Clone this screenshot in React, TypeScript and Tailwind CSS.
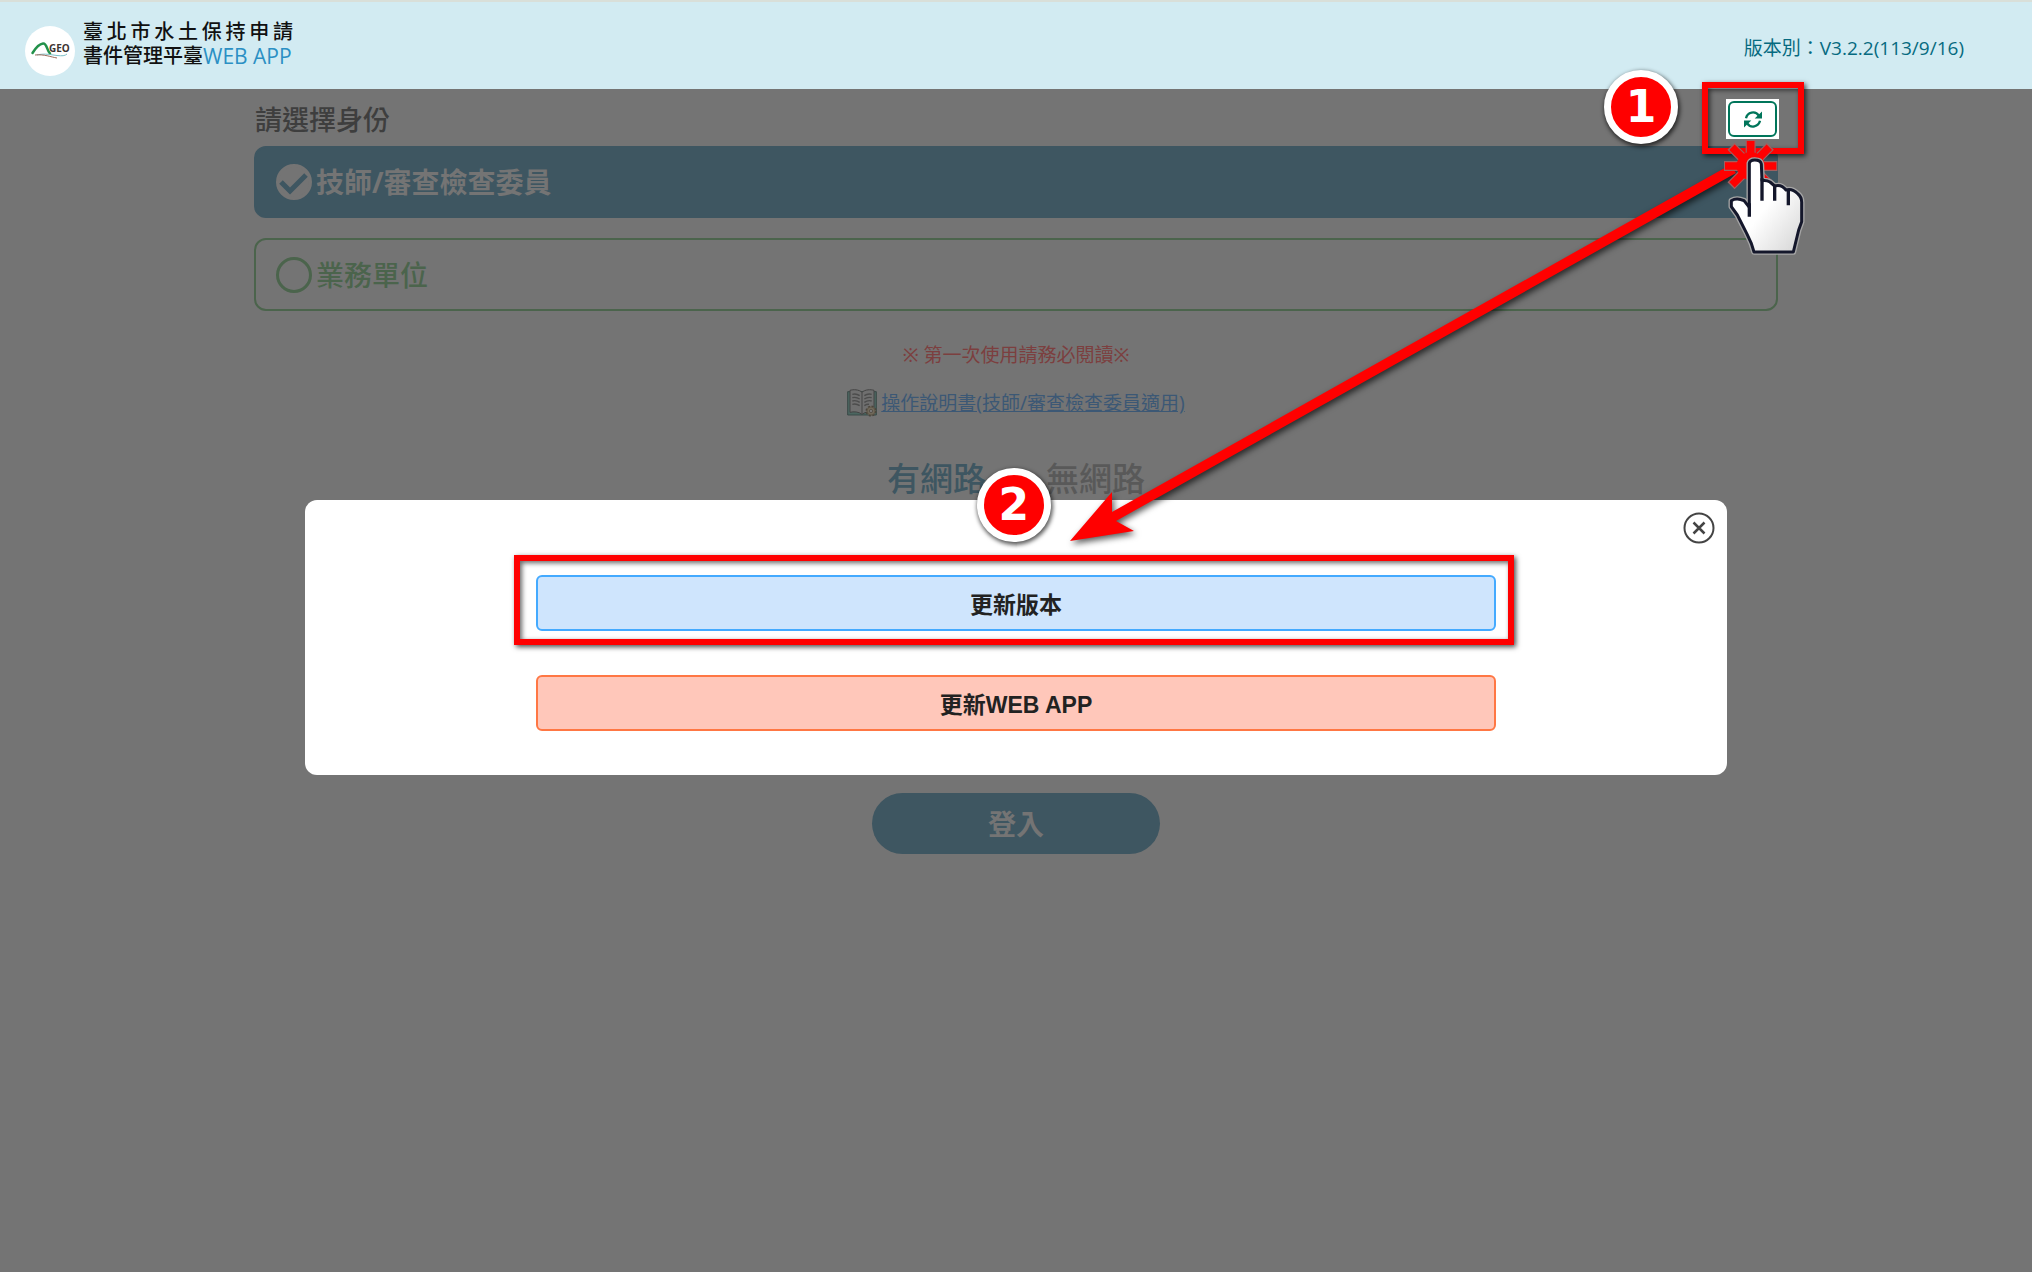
import { useState } from "react";

function Logo() {
  return (
    <svg viewBox="0 0 50 50" className="size-[50px] shrink-0" aria-hidden="true">
      <circle cx="25" cy="25" r="25" fill="#fff" />
      <path d="M7.500 27C10 23 14 18 18 17.500C22 17 22 25 25 27.500" fill="none" stroke="#22914a" strokeWidth="2.500" strokeLinecap="round" />
      <path d="M12 29C20 27 27 29 32 29.500S40 30 42 28" fill="none" stroke="#7cc0c8" strokeWidth="1" />
      <path d="M10 29C19 28 26 31 32 32" fill="none" stroke="#9c6a5a" strokeWidth="1" />
      <text x="24" y="26" fontSize="10" fontWeight="700" fontFamily="Liberation Sans Narrow, Open Sans, sans-serif" fill="#3d3532">GEO</text>
    </svg>
  );
}

function Badge({ n, className }: { n: number; className: string }) {
  return (
    <span
      className={`absolute flex size-[74px] items-center justify-center rounded-full border-[7px] border-white bg-[#ff0000] font-['DejaVu_Sans',sans-serif] text-[44px] leading-none font-bold text-white shadow-[1px_2px_4px_1px_rgba(0,0,0,0.65)] ${className}`}
    >
      {n}
    </span>
  );
}

function HighlightFrame({ className }: { className: string }) {
  return (
    <span
      aria-hidden="true"
      className={`pointer-events-none absolute border-[6px] border-[#ff0000] shadow-[2px_2px_5px_rgba(0,0,0,0.7),inset_2px_2px_5px_rgba(0,0,0,0.6)] ${className}`}
    />
  );
}

function SyncIcon() {
  return (
    <svg viewBox="0 0 54 50" className="h-[17px] w-[18px]" aria-hidden="true">
      <g fill="none" stroke="#00755a" strokeWidth="7">
        <path d="M6 21C10 3 34 -3 45 14" />
        <path d="M48 29C44 47 20 53 9 36" />
      </g>
      <path d="M54 1V22H32ZM0 49V28H22Z" fill="#00755a" />
    </svg>
  );
}

function BookIcon() {
  return (
    <svg viewBox="0 0 90 84" className="h-[28px] w-[30px] shrink-0" aria-hidden="true">
      <path d="M2 8H88V78H2Z" fill="#4b6660" stroke="#3b4a48" strokeWidth="3" />
      <path d="M45 10C36 1 18 1 9 4V70C20 67 36 68 45 76C54 68 70 67 81 70V4C72 1 54 1 45 10Z" fill="#6f6f6f" stroke="#444" strokeWidth="3" />
      <path d="M45 10V74" stroke="#444" strokeWidth="3" />
      <path d="M16 16Q28 13 38 20M16 26Q28 23 38 30M16 36Q28 33 38 40M16 46Q28 43 38 50M52 20Q62 13 74 16M52 30Q62 23 74 26M52 40Q62 33 74 36M52 50Q60 45 66 46" fill="none" stroke="#4c4c4c" strokeWidth="4" />
      <circle cx="72" cy="66" r="14" fill="#71695a" stroke="#4b463d" strokeWidth="5" strokeDasharray="6 5" />
      <circle cx="72" cy="66" r="12" fill="#71695a" stroke="#544d41" strokeWidth="2" />
      <circle cx="72" cy="66" r="5" fill="#777" stroke="#4b463d" strokeWidth="2" />
    </svg>
  );
}

function ClickPointer() {
  const hand =
    "M88 352V220Q90 210 104 210Q122 210 124 222L126 272Q140 270 150 276L164 288Q184 282 198 300Q216 294 234 312Q246 322 245 340V395L236 420L220 486H102L94 460L80 430L52 375L34 350V332Q50 322 72 332Z";
  return (
    <svg viewBox="0 0 300 510" className="pointer-events-none absolute -top-[9px] -left-[6px] h-[170px] w-[100px]" aria-hidden="true">
      <defs>
        <linearGradient id="hand" x1="0" y1="0" x2="1" y2="1">
          <stop offset="0.5" stopColor="#fff" />
          <stop offset="1" stopColor="#d4d4d4" />
        </linearGradient>
      </defs>
      <g fill="none" strokeLinecap="butt">
        <path d="M92 150V228M12 228H172M33 169L150 286M151 169L33 287" stroke="#a06060" strokeWidth="30" />
        <path d="M92 153V228M15 228H169M36 172L144 280M148 172L36 284" stroke="#ff0000" strokeWidth="23" />
      </g>
      <circle cx="92" cy="228" r="42" fill="#ff0000" />
      <path d={hand} fill="none" stroke="#a5a5a5" strokeWidth="17" strokeLinejoin="round" />
      <path d={hand} fill="url(#hand)" stroke="#14172b" strokeWidth="9" strokeLinejoin="round" />
      <path d="M88 340V380M126 265V332M164 284V332M205 300V346" fill="none" stroke="#14172b" strokeWidth="10" />
    </svg>
  );
}

const roles = [
  { id: "engineer", label: "技師/審查檢查委員" },
  { id: "agency", label: "業務單位" },
];

export default function App() {
  const [role, setRole] = useState("engineer");
  return (
    <div className="relative min-h-screen bg-[#747474] font-['Noto_Sans','Noto_Sans_CJK_TC',sans-serif]">
      <header className="flex h-[89px] items-center justify-between border-t-2 border-[#d9dfd9] bg-[#d2ebf2] pt-1 pr-[68px] pl-[25px]">
        <div className="flex items-end gap-2">
          <Logo />
          <h1 className="mb-2 w-[210px] font-['Liberation_Sans','Noto_Sans_CJK_TC',sans-serif] text-[20px] leading-6 font-medium text-[#111]">
            <span className="block [text-align-last:justify]">臺北市水土保持申請</span>
            <span className="flex items-center whitespace-nowrap">
              書件管理平臺
              <span className="font-['Open_Sans',sans-serif] text-[21px] leading-6 font-normal text-[#2b90c4]">WEB APP</span>
            </span>
          </h1>
        </div>
        <p className="font-['Open_Sans','Noto_Sans_CJK_TC',sans-serif] text-[19px] leading-7 text-[#066a80]">版本別：V3.2.2(113/9/16)</p>
      </header>

      <main className="mx-auto flex w-3/4 flex-col">
        <div className="flex items-start justify-between pt-[10px] pb-[6px]">
          <h2 className="pt-px pl-px text-[27px] leading-10 font-medium text-[#3e3e3e]">請選擇身份</h2>
          <div className="relative z-20 -mr-px bg-white p-0.5">
            <button type="button" aria-label="更新" className="flex h-9 w-[49px] items-center justify-center rounded-md border-2 border-[#00755a] bg-white">
              <SyncIcon />
            </button>
            <HighlightFrame className="-top-[17px] -left-[24px] h-[72px] w-[102px]" />
            <Badge n={1} className="-top-[29px] -left-[122px]" />
          </div>
        </div>

        <div role="radiogroup" aria-label="請選擇身份" className="flex flex-col gap-5">
          {roles.map((r) => {
            const on = role === r.id;
            return (
              <label
                key={r.id}
                className={`flex items-center gap-1 rounded-xl border-2 pl-5 text-[28px] ${
                  on ? "h-[72px] border-[#3e5661] bg-[#3e5661] font-bold text-[#747474]" : "h-[73px] border-[#4b644c] font-medium text-[#4b644c]"
                }`}
              >
                <span className="relative size-9">
                  <input
                    type="radio"
                    name="role"
                    checked={on}
                    onChange={() => setRole(r.id)}
                    className="block size-9 appearance-none rounded-full border-[3px] border-[#4b644c] checked:border-[#747474] checked:bg-[#747474]"
                  />
                  {on && (
                    <svg viewBox="0 0 36 36" className="pointer-events-none absolute inset-0" aria-hidden="true">
                      <path d="M5 18L14 27L30 11" fill="none" stroke="#3e5661" strokeWidth="5" />
                    </svg>
                  )}
                </span>
                {r.label}
              </label>
            );
          })}
        </div>

        <p className="mt-[30px] text-center text-[19px] leading-7 text-[#7c3f3f]">※ 第一次使用請務必閱讀※</p>
        <div className="mt-5 flex h-7 items-center justify-center gap-1">
          <BookIcon />
          <a href="#manual" className="text-[19px] leading-7 text-[#3c5875] underline">操作說明書(技師/審查檢查委員適用)</a>
        </div>
        <div className="mt-[38px] flex justify-center gap-[60px] text-[33px] leading-[48px] font-medium">
          <button type="button" className="text-[#3e5661]">有網路</button>
          <button type="button" className="text-[#595959]">無網路</button>
        </div>
        <button type="button" className="mx-auto mt-[290px] h-[61px] w-72 rounded-full bg-[#3e5661] text-[28px] font-bold text-[#747474]">
          登入
        </button>
      </main>

      <div className="absolute inset-0 z-10 flex items-center justify-center pt-[3px]">
        <div role="dialog" aria-label="更新" className="relative flex w-[70%] flex-col items-center gap-11 rounded-xl bg-white pt-[75px] pb-11 font-['Liberation_Sans','Noto_Sans_CJK_TC',sans-serif]">
          <button type="button" aria-label="關閉" className="absolute top-3 right-3 size-8">
            <svg viewBox="0 0 32 32" aria-hidden="true">
              <circle cx="16" cy="16" r="14.500" fill="none" stroke="#444" strokeWidth="2" />
              <path d="M10.500 10.500L21.500 21.500M21.500 10.500L10.500 21.500" stroke="#444" strokeWidth="2.500" />
            </svg>
          </button>
          <button type="button" className="relative h-14 w-[67.5%] rounded-md border-2 border-[#44aaff] bg-[#cfe5fd] pt-1 text-[23px] leading-8 font-bold text-[#222]">
            更新版本
            <HighlightFrame className="-top-[22px] -right-5 -bottom-4 -left-6" />
          </button>
          <button type="button" className="h-14 w-[67.5%] rounded-md border-2 border-[#ff7744] bg-[#ffc7ba] pt-1 text-[23px] leading-8 font-bold text-[#222]">
            更新WEB APP
          </button>
          <Badge n={2} className="-top-8 left-[672px]" />
        </div>
      </div>

      <svg viewBox="0 0 680 390" className="pointer-events-none absolute top-[160px] left-[1062px] z-30 h-[390px] w-[680px] [filter:drop-shadow(2px_3px_3px_rgba(0,0,0,0.65))]" aria-hidden="true">
        <path d="M8 381L50 332V352L668 5L674 13L54 361L72 371Z" fill="#ff0000" />
      </svg>
      <div className="pointer-events-none absolute inset-x-0 top-[99px] z-40">
        <div className="mx-auto flex w-3/4 justify-end">
          <div className="relative -mr-px h-10 w-[53px]">
            <ClickPointer />
          </div>
        </div>
      </div>
    </div>
  );
}
